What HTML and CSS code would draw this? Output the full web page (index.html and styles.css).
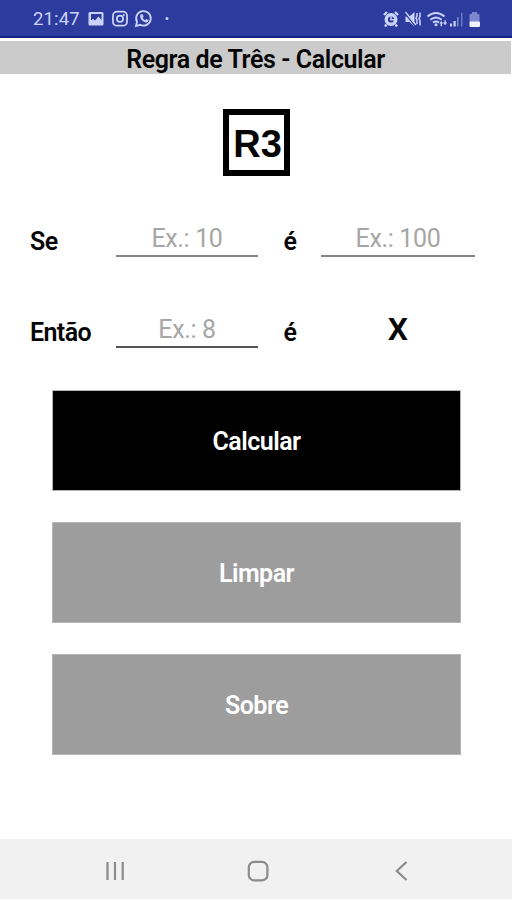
FILE: index.html
```html
<!DOCTYPE html>
<html lang="pt-BR">
<head>
<meta charset="utf-8">
<title>Regra de Três - Calcular</title>
<link rel="stylesheet" href="styles.css">
</head>
<body>
<div class="screen">
  <header class="status">
    <span class="clock">21:47</span>
    <svg class="left-icons" width="86" height="20" viewBox="0 0 86 20">
      <rect x="2.500" y="3" width="15" height="13.500" rx="1.500" fill="currentColor"/>
      <path d="M5 5h10.500v6l-3-3.500-3.500 4-2-1.800-2 1.800z" fill="#2d3b9f"/>
      <g fill="none" stroke="currentColor" stroke-width="1.800">
        <rect x="27" y="2.700" width="14" height="14" rx="4"/>
        <circle cx="34" cy="9.700" r="3.100"/>
        <path d="M50 17l1-4.200a7.300 7.300 0 1 1 3 3z"/>
      </g>
      <circle cx="37.800" cy="6" r="1" fill="currentColor"/>
      <path d="M55 5.300l1.700 0 .9 2.300-1 1.100c.7 1.300 1.400 1.900 2.700 2.500l1.100-1.100 2.100 1c-.2 2.300-1.800 2.700-3.500 2.100-2.800-1-4.600-3.200-4.800-5.300-.1-1.200.3-2 .8-2.600z" fill="currentColor"/>
      <circle cx="81" cy="9.500" r="1.500" fill="currentColor"/>
    </svg>
    <svg class="right-icons" width="102" height="22" viewBox="0 0 102 22">
      <g fill="none" stroke="currentColor">
        <path d="M3 6l3-3M14 3l3 3M5.500 15.500l-1.500 2M14.500 15.500l1.500 2" stroke-width="2.400"/>
        <circle cx="10" cy="10.500" r="4.800" stroke-width="3.400"/>
        <path d="M10 7.500v3.300h3" stroke-width="1.500"/>
      </g>
      <path d="M24.500 7.500h4l5-4.500v14.500l-5-4.500h-4z" fill="currentColor"/>
      <path d="M24 4.500l10.500 13" stroke="#2d3b9f" stroke-width="1.200"/>
      <path d="M24.500 3l10.500 13" stroke="currentColor" stroke-width="1.300"/>
      <path d="M36 4v3l-1 2 1 2v4M39 3.500v4l-1 2 1 2v5" fill="none" stroke="currentColor" stroke-width="1.500"/>
      <g fill="none" stroke="currentColor" stroke-width="1.900">
        <path d="M46.500 7.500q8.500-7 17 0M49.300 10.700q5.700-4.600 11.400 0M52 13.600q3-2.300 6 0"/>
      </g>
      <circle cx="55" cy="15.800" r="1.500" fill="currentColor"/>
      <path d="M58.300 14.500l2-2.600 2 2.600h-1.300v2.800h-1.400v-2.800zM62 13.500h1.400v-2.200h1.400v2.200h1.400l-2.100 2.800z" fill="currentColor"/>
      <g fill="currentColor">
        <rect x="69" y="14.500" width="2" height="3"/>
        <rect x="72.500" y="12" width="2.200" height="5.500"/>
        <rect x="76" y="8" width="1.500" height="9.500" opacity=".5"/>
        <rect x="80" y="4" width="1.500" height="13.500" opacity=".4"/>
        <path d="M88.500 5.500l2.500-1V3h5v1.500l2.500 1V13h-10z" opacity=".5"/>
        <rect class="charge" x="88.500" y="12.500" width="10.500" height="5.500" rx="1"/>
      </g>
    </svg>
  </header>
  <h1 class="title"><span>Regra de Três - Calcular</span></h1>
  <main class="content">
    <div class="logo"><span>R3</span></div>
    <div class="row">
      <label>Se</label>
      <input type="text" placeholder="Ex.: 10">
      <span class="is">é</span>
      <input type="text" placeholder="Ex.: 100">
    </div>
    <div class="row">
      <label>Então</label>
      <input class="active" type="text" placeholder="Ex.: 8">
      <span class="is">é</span>
      <strong class="result">X</strong>
    </div>
    <div class="actions">
      <button class="primary"><span>Calcular</span></button>
      <button><span>Limpar</span></button>
      <button><span>Sobre</span></button>
    </div>
  </main>
  <nav class="navbar">
    <svg width="24" height="24" viewBox="0 0 24 24"><path d="M4.500 3v18M12 3v18M19.700 3v18"/></svg>
    <svg width="24" height="24" viewBox="0 0 24 24"><rect x="2.800" y="2.800" width="18.600" height="18.600" rx="5.500"/></svg>
    <svg width="24" height="24" viewBox="0 0 24 24"><path d="M17.500 3L7.800 12l9.700 9"/></svg>
  </nav>
</div>
</body>
</html>
```
FILE: styles.css
```css
* { box-sizing: border-box; }
body {
  margin: 0;
  background: #fff;
  color: #050505;
  font-family: Roboto, "Liberation Sans", sans-serif;
}
.screen {
  width: 512px;
  height: 900px;
  display: flex;
  flex-direction: column;
  overflow: hidden;
}
.status {
  height: 38px;
  display: flex;
  align-items: flex-start;
  padding: 9px 29px 0 33px;
  background: #2d3b9f;
  border-bottom: 2px solid #142480;
  color: #cbd3fb;
}
.clock { font-size: 18.5px; line-height: 20px; width: 53px; letter-spacing: .15px; }
.right-icons { margin-left: auto; }
.charge { fill: #f0f3ff; }
.title {
  margin: 3px 1px 0 0;
  height: 33px;
  background: #cbcbcb;
  font-size: 25px;
  font-weight: 600;
  letter-spacing: -.4px;
  line-height: 37px;
  text-align: center;
  white-space: nowrap;
}
.content { flex: 1; display: flex; flex-direction: column; }
.logo {
  width: 67px;
  height: 67px;
  margin: 35px 0 0 223px;
  border: 6px solid #000;
  display: flex;
  align-items: center;
  justify-content: center;
  font: bold 38px/55px "Liberation Sans", sans-serif;
  padding: 3px 0 0 2px;
}
.row {
  display: grid;
  grid-template-columns: 86px 142px 63px 154px;
  align-items: start;
  height: 36px;
  margin: 45px 0 0 30px;
  font-size: 25px;
  line-height: 41px;
}
.row + .row { margin-top: 55px; }
label, .is { font-weight: 600; letter-spacing: -.6px; }
.is { text-align: center; padding-left: 1px; }
input {
  width: 100%;
  height: 36px;
  border: 0;
  border-bottom: 2px solid #858585;
  padding: 0;
  background: transparent;
  font: 400 25px/34px Roboto, sans-serif;
  letter-spacing: -.35px;
  text-align: center;
  outline: 0;
}
input::placeholder { color: #a6a6a6; opacity: 1; }
.active { border-color: #555; }
.result { text-align: center; font-size: 32px; font-weight: 600; line-height: 34px; }
.actions {
  display: flex;
  flex-direction: column;
  gap: 31px;
  margin: 42px 51px 0 52px;
}
button {
  height: 101px;
  border: 1px solid #b5b5b5;
  padding: 1px 0 0;
  background: #9d9d9d;
  color: #fff;
  font: 600 25px Roboto, sans-serif;
  letter-spacing: -.5px;
}
.primary { background: #000; }
.navbar {
  height: 60px;
  margin-bottom: 1px;
  padding: 20px 99px 0 103px;
  display: flex;
  justify-content: space-between;
  background: #f1f1f1;
}
.navbar svg { fill: none; stroke: #8b8b8b; stroke-width: 2.2; }
```
